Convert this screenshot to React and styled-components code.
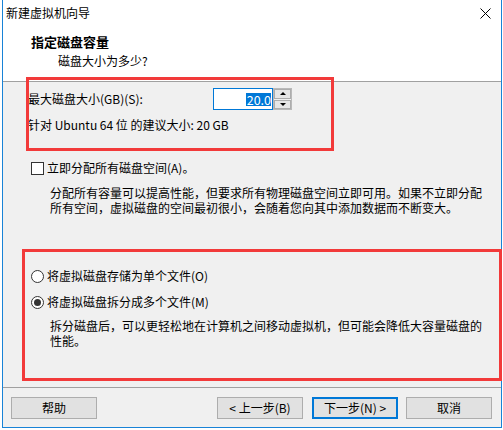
import React from "react";
import styled, { createGlobalStyle } from "styled-components";

const Global = createGlobalStyle`
  html, body { margin: 0; padding: 0; background: #ffffff; }
  body {
    font-family: "Noto Sans CJK SC", "Noto Sans", sans-serif;
    font-size: 12px;
    color: #000;
  }
`;

const Page = styled.div`
  width: 503px;
  height: 430px;
  padding-left: 2px;
  box-sizing: border-box;
  background: #ffffff;
  overflow: hidden;
`;

const Window = styled.div`
  position: relative;
  width: 500px;
  height: 428px;
  box-sizing: border-box;
  border: 1px solid #1883d7;
  border-top: none;
  display: flex;
  flex-direction: column;
  background: #f0f0f0;
`;

const TitleBar = styled.div`
  height: 26px;
  flex: none;
  background: #fff;
  display: flex;
  align-items: center;
  justify-content: space-between;
  padding: 0 10px 0 3px;
  line-height: 16px;
`;

const Header = styled.div`
  height: 56px;
  flex: none;
  box-sizing: border-box;
  background: #fff;
  border-bottom: 1px solid #a0a0a0;
  padding: 8px 0 0 28px;
  display: flex;
  flex-direction: column;
  gap: 3px;
`;

const HeaderTitle = styled.div`
  font-size: 13px;
  font-weight: 700;
  line-height: 16px;
`;

const HeaderSub = styled.div`
  line-height: 16px;
  margin-left: 27px;
`;

const Body = styled.div`
  flex: 1;
  padding: 6px 0 0 25px;
  display: flex;
  flex-direction: column;
  align-items: flex-start;
`;

const Row = styled.div`
  display: flex;
  align-items: center;
  height: ${(p) => p.$h || 16}px;
  margin-top: ${(p) => p.$mt || 0}px;
  line-height: 16px;
  white-space: nowrap;
`;

const FieldLabel = styled.div`
  width: 185px;
`;

const Input = styled.div`
  width: 60px;
  height: 22px;
  box-sizing: border-box;
  border: 1px solid #0078d7;
  background: #fff;
  display: flex;
  align-items: center;
  justify-content: flex-end;
  padding-right: 1px;
`;

const Selected = styled.span`
  background: #0078d7;
  color: #fff;
  font-size: 12.5px;
  line-height: 13px;
  padding: 0 0 0 1px;
`;

const Spinner = styled.div`
  width: 19px;
  height: 22px;
  box-sizing: border-box;
  border: 1px solid #b9b9b9;
  display: flex;
  flex-direction: column;
  gap: 1px;
  background: #f0f0f0;
`;

const SpinButton = styled.div`
  flex: 1;
  background: #e6e6e6;
  border: 1px solid #adadad;
  display: flex;
  align-items: center;
  justify-content: center;
`;

const Arrow = styled.div`
  width: 0;
  height: 0;
  border-left: 3px solid transparent;
  border-right: 3px solid transparent;
  ${(p) =>
    p.$down ? "border-top: 3px solid #000;" : "border-bottom: 3px solid #000;"}
`;

const Text = styled.div`
  line-height: 16px;
  margin-top: ${(p) => p.$mt || 0}px;
  white-space: nowrap;
`;

const Desc = styled.div`
  margin: ${(p) => p.$mt || 0}px 0 0 22px;
  line-height: 15px;
  white-space: nowrap;
`;

const CheckBox = styled.div`
  width: 13px;
  height: 13px;
  box-sizing: border-box;
  border: 1px solid #333;
  background: #fff;
  margin: 0 3px 0 3px;
`;

const Radio = styled.div`
  width: 13px;
  height: 13px;
  box-sizing: border-box;
  border: 1px solid #333;
  border-radius: 50%;
  background: #fff;
  margin: 0 3px 0 3px;
  display: flex;
  align-items: center;
  justify-content: center;
  &::after {
    content: "";
    display: ${(p) => (p.$on ? "block" : "none")};
    width: 7px;
    height: 7px;
    border-radius: 50%;
    background: #333;
  }
`;

const Footer = styled.div`
  height: 40px;
  flex: none;
  box-sizing: border-box;
  border-top: 1px solid #a0a0a0;
  padding: 9px 9px 0 8px;
  display: flex;
  align-items: flex-start;
`;

const ButtonGroup = styled.div`
  margin-left: auto;
  display: flex;
  gap: 9px;
  & > :last-child {
    margin-left: -1px;
  }
`;

const Button = styled.div`
  width: 86px;
  height: 22px;
  box-sizing: border-box;
  background: #e1e1e1;
  border: ${(p) => (p.$default ? "2px solid #0078d7" : "1px solid #adadad")};
  display: flex;
  align-items: center;
  justify-content: center;
  line-height: 16px;
  white-space: nowrap;
`;

const Mark = styled.div`
  position: absolute;
  left: ${(p) => p.$x}px;
  top: ${(p) => p.$y}px;
  width: ${(p) => p.$w}px;
  height: ${(p) => p.$h}px;
  box-sizing: border-box;
  border: 3px solid #f23a3a;
  pointer-events: none;
`;

const CloseIcon = () => (
  <svg width="11" height="11" viewBox="0 0 11 11">
    <path d="M0.5 0.5 L10.5 10.5 M10.5 0.5 L0.5 10.5" stroke="#000" strokeWidth="1" fill="none" />
  </svg>
);

export default function App() {
  return (
    <Page>
      <Global />
      <Window>
        <TitleBar>
          <span>新建虚拟机向导</span>
          <CloseIcon />
        </TitleBar>
        <Header>
          <HeaderTitle>指定磁盘容量</HeaderTitle>
          <HeaderSub>磁盘大小为多少?</HeaderSub>
        </Header>
        <Body>
          <Row $h={22}>
            <FieldLabel>最大磁盘大小(GB)(S):</FieldLabel>
            <Input>
              <Selected>20.0</Selected>
            </Input>
            <Spinner>
              <SpinButton>
                <Arrow />
              </SpinButton>
              <SpinButton>
                <Arrow $down />
              </SpinButton>
            </Spinner>
          </Row>
          <Text $mt={7}>针对 Ubuntu 64 位 的建议大小: 20 GB</Text>
          <Row $mt={27}>
            <CheckBox />
            <span>立即分配所有磁盘空间(A)。</span>
          </Row>
          <Desc $mt={9}>
            分配所有容量可以提高性能，但要求所有物理磁盘空间立即可用。如果不立即分配
            <br />
            所有空间，虚拟磁盘的空间最初很小，会随着您向其中添加数据而不断变大。
          </Desc>
          <Row $mt={53}>
            <Radio />
            <span>将虚拟磁盘存储为单个文件(O)</span>
          </Row>
          <Row $mt={10}>
            <Radio $on />
            <span>将虚拟磁盘拆分成多个文件(M)</span>
          </Row>
          <Desc $mt={8}>
            拆分磁盘后，可以更轻松地在计算机之间移动虚拟机，但可能会降低大容量磁盘的
            <br />
            性能。
          </Desc>
        </Body>
        <Footer>
          <Button>帮助</Button>
          <ButtonGroup>
            <Button>&lt; 上一步(B)</Button>
            <Button $default>下一步(N) &gt;</Button>
            <Button>取消</Button>
          </ButtonGroup>
        </Footer>
        <Mark $x={23} $y={77} $w={308} $h={74} />
        <Mark $x={19} $y={249} $w={480} $h={132} />
      </Window>
    </Page>
  );
}
